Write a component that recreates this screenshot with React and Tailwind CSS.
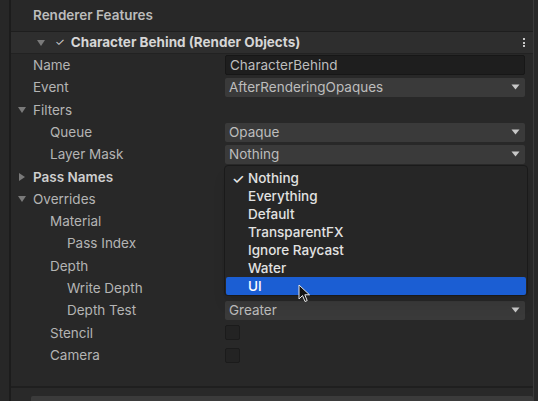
import React from 'react';

const FONT = { fontFamily: 'Inter, "Noto Sans", sans-serif' };

const Arrow = () => (
  <svg width="9" height="6" viewBox="0 0 9 6" className="shrink-0">
    <path d="M0.5 0.5 L8.5 0.5 L4.5 5.5 Z" fill="#c8c8c8" />
  </svg>
);

const Fold = ({ open }) => (
  <svg width="8" height="8" viewBox="0 0 8 8" className="shrink-0">
    {open ? <path d="M0 1 L8 1 L4 7 Z" fill="#7a7a7a" /> : <path d="M1 0 L7 4 L1 8 Z" fill="#7a7a7a" />}
  </svg>
);

const Dropdown = ({ value }) => (
  <div className="flex items-center justify-between h-[19px] w-[300px] bg-[#3a3a3a] rounded-[2px] pl-[4px] pr-[5px] text-[#bdbdbd]">
    <span>{value}</span>
    <Arrow />
  </div>
);

const TextField = ({ value }) => (
  <div className="flex items-center h-[20px] w-[300px] bg-[#1e1e1e] border border-[#171717] rounded-[2px] pl-[4px] text-[#bdbdbd]">
    {value}
  </div>
);

const Checkbox = () => (
  <div className="w-[15px] h-[15px] bg-[#232323] border border-[#1b1b1b] rounded-[2px]" />
);

const rows = [
  { label: 'Name', indent: 0, field: <TextField value="CharacterBehind" /> },
  { label: 'Event', indent: 0, field: <Dropdown value="AfterRenderingOpaques" /> },
  { label: 'Filters', indent: 0, fold: 'open' },
  { label: 'Queue', indent: 1, field: <Dropdown value="Opaque" /> },
  { label: 'Layer Mask', indent: 1, field: <Dropdown value="Nothing" /> },
  { label: 'Pass Names', indent: 0, fold: 'closed', bold: true },
  { label: 'Overrides', indent: 0, fold: 'open' },
  { label: 'Material', indent: 1 },
  { label: 'Pass Index', indent: 2 },
  { label: 'Depth', indent: 1 },
  { label: 'Write Depth', indent: 2 },
  { label: 'Depth Test', indent: 2, field: <Dropdown value="Greater" /> },
  { label: 'Stencil', indent: 1, field: <Checkbox /> },
  { label: 'Camera', indent: 1, field: <Checkbox /> },
];

const layers = ['Nothing', 'Everything', 'Default', 'TransparentFX', 'Ignore Raycast', 'Water', 'UI'];

export default function App() {
  return (
    <div className="w-[538px] h-[401px] flex bg-[#282828] text-[13.5px] overflow-hidden" style={FONT}>
      <div className="w-[11px] bg-[#272727] border-r-2 border-[#1c1c1c]" />
      <div className="relative flex-1 flex flex-col border-r border-[#3a3a3a] mr-[4px]">
        <div className="h-[32px] flex items-center pl-[22px] text-[#bcbcbc] font-semibold border-b border-[#1e1e1e]">
          Renderer Features
        </div>
        <div className="h-[22px] flex items-center bg-[#2e2e2e] border-b border-[#222] pl-[26px] pr-[8px]">
          <Fold open />
          <span className="ml-[10px] text-[#d0d0d0] text-[11px]">✓</span>
          <span className="ml-[6px] font-bold text-[#d6d6d6]">Character Behind (Render Objects)</span>
          <span className="ml-auto flex flex-col gap-[1.5px]">
            <span className="w-[2px] h-[2px] bg-[#c8c8c8]" />
            <span className="w-[2px] h-[2px] bg-[#c8c8c8]" />
            <span className="w-[2px] h-[2px] bg-[#c8c8c8]" />
          </span>
        </div>
        <div className="flex flex-col">
          {rows.map((r) => (
            <div key={r.label} className="h-[22.3px] flex items-center">
              <div className="w-[214px] flex items-center relative" style={{ paddingLeft: 22 + r.indent * 17 }}>
                {r.fold && (
                  <span className="absolute left-[7px] top-1/2 -translate-y-1/2">
                    <Fold open={r.fold === 'open'} />
                  </span>
                )}
                <span className={r.bold ? 'text-[#cfcfcf] font-semibold' : 'text-[#b4b4b4]'}>{r.label}</span>
              </div>
              {r.field}
            </div>
          ))}
        </div>
        <div className="flex-1" />
        <div className="h-[15px] border-t-2 border-[#1f1f1f] bg-[#292929] pl-[20px] flex items-end">
          <div className="w-full h-[5px] bg-[#3b3b3b] rounded-t-[2px]" />
        </div>

        <div className="absolute left-[213px] top-[165px] w-[304px] h-[131px] bg-[#262626] border border-[#1a1a1a] rounded-[4px] shadow-lg pt-[3px] px-[1px]">
          {layers.map((l, i) => (
            <div
              key={l}
              className={
                'h-[18px] flex items-center pl-[22px] relative font-medium ' +
                (l === 'UI' ? 'bg-[#1b5ed3] text-white rounded-[2px]' : 'text-[#e2e2e2]')
              }
            >
              {i === 0 && <span className="absolute left-[6px] text-[#e8e8e8] text-[14px]">✓</span>}
              {l}
            </div>
          ))}
        </div>

        <svg className="absolute left-[287px] top-[284px]" width="14" height="20" viewBox="0 0 14 20">
          <path d="M1 1 L1 15 L4.5 11.5 L7 17.5 L9.2 16.6 L6.8 10.8 L11.5 10.8 Z" fill="#111" stroke="#e8e8e8" strokeWidth="1" />
        </svg>
      </div>
    </div>
  );
}
